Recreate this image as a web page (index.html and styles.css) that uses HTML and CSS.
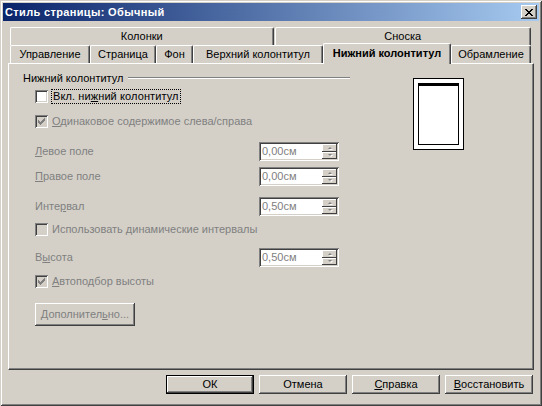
FILE: index.html
```html
<!DOCTYPE html>
<html lang="ru">
<head>
    <meta charset="UTF-8">
    <title>Стиль страницы: Обычный</title>
    <link rel="stylesheet" href="styles.css">
</head>
<body>
    <div class="window">
        <div class="titlebar">
            <span class="title">Стиль страницы: Обычный</span>
            <span class="close-btn">
                <svg width="8" height="7" viewBox="0 0 8 7" shape-rendering="crispEdges">
                    <path fill="#000" d="M0 0h2v1h-2z M6 0h2v1h-2z M1 1h2v1h-2z M5 1h2v1h-2z M2 2h2v1h-2z M4 2h2v1h-2z M3 3h2v1h-2z M4 4h2v1h-2z M2 4h2v1h-2z M5 5h2v1h-2z M1 5h2v1h-2z M6 6h2v1h-2z M0 6h2v1h-2z"/>
                </svg>
            </span>
        </div>

        <div class="client">
            <!-- back row of tabs -->
            <div class="tab-row">
                <div class="tab tab-columns">Колонки</div>
                <div class="tab tab-footnote">Сноска</div>
            </div>
            <!-- front row of tabs -->
            <div class="tab-row">
                <div class="tab tab-organizer">Управление</div>
                <div class="tab tab-page">Страница</div>
                <div class="tab tab-area">Фон</div>
                <div class="tab tab-header">Верхний колонтитул</div>
                <div class="tab tab-footer active">Нижний колонтитул</div>
                <div class="tab tab-borders">Обрамление</div>
            </div>

            <div class="panel">
                <div class="page-form">
                    <div class="group-head">
                        <span>Нижний колонтитул</span>
                        <span class="rule"></span>
                    </div>

                    <div class="row check-row row-on">
                        <span class="check"></span>
                        <span class="focus">Вкл. ни<u>ж</u>ний колонтитул</span>
                    </div>

                    <div class="row check-row row-same disabled">
                        <span class="check checked">
                            <svg width="13" height="13" viewBox="0 0 13 13" shape-rendering="crispEdges">
                                <path fill="#808080" d="M3 5h1v3h-1z M4 6h1v3h-1z M5 7h1v3h-1z M6 6h1v3h-1z M7 5h1v3h-1z M8 4h1v3h-1z M9 3h1v3h-1z"/>
                            </svg>
                        </span>
                        <span class="check-label"><u>О</u>динаковое содержимое слева/справа</span>
                    </div>

                    <div class="row field-row row-left disabled">
                        <span class="field-label"><u>Л</u>евое поле</span>
                        <div class="spin">
                            <span class="spin-value">0,00см</span>
                            <span class="spin-btns"><span class="spin-up"></span><span class="spin-down"></span></span>
                        </div>
                    </div>

                    <div class="row field-row row-right disabled">
                        <span class="field-label"><u>П</u>равое поле</span>
                        <div class="spin">
                            <span class="spin-value">0,00см</span>
                            <span class="spin-btns"><span class="spin-up"></span><span class="spin-down"></span></span>
                        </div>
                    </div>

                    <div class="row field-row row-spacing disabled">
                        <span class="field-label">Инте<u>р</u>вал</span>
                        <div class="spin">
                            <span class="spin-value">0,50см</span>
                            <span class="spin-btns"><span class="spin-up"></span><span class="spin-down"></span></span>
                        </div>
                    </div>

                    <div class="row check-row row-dynamic disabled">
                        <span class="check"></span>
                        <span class="check-label">Использовать <u>д</u>инамические интервалы</span>
                    </div>

                    <div class="row field-row row-height disabled">
                        <span class="field-label">В<u>ы</u>сота</span>
                        <div class="spin">
                            <span class="spin-value">0,50см</span>
                            <span class="spin-btns"><span class="spin-up"></span><span class="spin-down"></span></span>
                        </div>
                    </div>

                    <div class="row check-row row-autofit disabled">
                        <span class="check checked">
                            <svg width="13" height="13" viewBox="0 0 13 13" shape-rendering="crispEdges">
                                <path fill="#808080" d="M3 5h1v3h-1z M4 6h1v3h-1z M5 7h1v3h-1z M6 6h1v3h-1z M7 5h1v3h-1z M8 4h1v3h-1z M9 3h1v3h-1z"/>
                            </svg>
                        </span>
                        <span class="check-label"><u>А</u>втоподбор высоты</span>
                    </div>

                    <div class="row row-more">
                        <button class="btn btn-more" disabled>Дополнител<u>ь</u>но...</button>
                    </div>
                </div>

                <div class="preview">
                    <div class="preview-page"></div>
                </div>
            </div>

            <div class="buttons">
                <button class="btn btn-default">ОК</button>
                <button class="btn">Отмена</button>
                <button class="btn"><u>С</u>правка</button>
                <button class="btn"><u>В</u>осстановить</button>
            </div>
        </div>
    </div>
</body>
</html>
```

FILE: styles.css
```css
* {
    margin: 0;
    padding: 0;
    box-sizing: border-box;
}

body {
    background: #d4d0c8;
    font-family: Tahoma, "Liberation Sans", sans-serif;
    font-size: 11px;
    line-height: 13px;
    color: #000;
}

u {
    text-decoration: underline;
    text-underline-offset: 1px;
}

/* window frame */
.window {
    width: 542px;
    height: 406px;
    padding: 3px;
    display: flex;
    flex-direction: column;
    background: #d4d0c8;
    box-shadow: inset 1px 1px #d4d0c8, inset -1px -1px #404040,
                inset 2px 2px #fff, inset -2px -2px #808080;
}

.titlebar {
    height: 18px;
    display: flex;
    align-items: center;
    justify-content: space-between;
    padding: 0 2px;
    background: linear-gradient(to right, #0a246a, #a6caf0);
    color: #fff;
    font-weight: bold;
}

.title {
    letter-spacing: 0.35px;
}

.close-btn {
    width: 16px;
    height: 14px;
    display: flex;
    align-items: center;
    justify-content: center;
    background: #d4d0c8;
    box-shadow: inset -1px -1px #404040, inset 1px 1px #fff, inset -2px -2px #808080;
}

.client {
    flex: 1;
    display: flex;
    flex-direction: column;
    padding: 6px 5px 0;
}

/* tabs */
.tab-row {
    display: flex;
    height: 18px;
    margin: 0 3px 0 2px;
}

.tab {
    height: 18px;
    display: flex;
    align-items: center;
    justify-content: center;
    white-space: nowrap;
    background: #d4d0c8;
    border-left: 1px solid #fff;
    border-top: 1px solid #fff;
    border-right: 1px solid #404040;
    border-radius: 2px 2px 0 0;
    box-shadow: inset -1px 0 #808080;
    padding-bottom: 1px;
}

.tab-columns { width: 264px; }
.tab-footnote { width: 257px; margin-left: 1px; }
.tab-organizer { width: 80px; }
.tab-page { width: 66px; }
.tab-area { width: 37px; }
.tab-header { width: 130px; }
.tab-footer { width: 128px; }
.tab-borders { width: 80px; }

.tab.active {
    height: 21px;
    margin-top: -2px;
    padding-bottom: 2px;
    font-weight: bold;
    position: relative;
    z-index: 1;
}

/* page panel */
.panel {
    height: 307px;
    display: flex;
    border-left: 1px solid #fff;
    border-top: 1px solid #fff;
    border-right: 1px solid #404040;
    border-bottom: 1px solid #404040;
    box-shadow: inset -1px -1px #808080;
}

.page-form {
    width: 341px;
    padding-left: 14px;
}

.group-head {
    display: flex;
    margin-top: 8px;
    height: 13px;
}

.group-head .rule {
    flex: 1;
    margin: 5px 0 0 5px;
    height: 2px;
    border-top: 1px solid #808080;
    border-bottom: 1px solid #fff;
}

.row {
    display: flex;
    align-items: center;
    padding-left: 12px;
}

.check-row {
    height: 15px;
}

.field-row {
    height: 19px;
}

.row-on { margin-top: 4px; }
.row-same { margin-top: 10px; }
.row-left { margin-top: 13px; }
.row-right { margin-top: 6px; }
.row-spacing { margin-top: 11px; }
.row-dynamic { margin-top: 6px; }
.row-height { margin-top: 11px; }
.row-autofit { margin-top: 7px; }
.row-more { margin-top: 14px; }

.disabled {
    color: #808080;
}

.check {
    width: 13px;
    height: 13px;
    flex: none;
    background: #fff;
    box-shadow: inset 1px 1px #808080, inset -1px -1px #fff,
                inset 2px 2px #404040, inset -2px -2px #d4d0c8;
}

.check svg {
    display: block;
}

.disabled .check {
    background: #d4d0c8;
}

.check-label {
    margin-left: 4px;
}

.focus {
    margin-left: 3px;
    padding: 0 1px;
    border: 1px dotted #000;
    letter-spacing: 0.1px;
}

.field-label {
    width: 224px;
}

/* spin field */
.spin {
    width: 80px;
    height: 19px;
    display: flex;
    padding: 2px;
    background: #fff;
    box-shadow: inset 1px 1px #808080, inset -1px -1px #fff,
                inset 2px 2px #404040, inset -2px -2px #d4d0c8;
}

.spin-value {
    flex: 1;
    padding-left: 1px;
    line-height: 15px;
}

.spin-btns {
    width: 15px;
    display: flex;
    flex-direction: column;
}

.spin-up,
.spin-down {
    flex: 1;
    display: flex;
    align-items: center;
    justify-content: center;
    background: #d4d0c8;
    box-shadow: inset -1px -1px #404040, inset 1px 1px #fff;
}

.spin-up::after,
.spin-down::after {
    content: "";
    border-left: 2px solid transparent;
    border-right: 2px solid transparent;
    filter: drop-shadow(1px 1px 0 #fff);
}

.spin-up::after {
    border-bottom: 2px solid #808080;
}

.spin-down::after {
    border-top: 2px solid #808080;
}

/* push buttons */
.btn {
    width: 88px;
    height: 19px;
    font: inherit;
    color: #000;
    background: #d4d0c8;
    border: none;
    box-shadow: inset -1px -1px #404040, inset 1px 1px #fff,
                inset -2px -2px #808080, inset 2px 2px #d4d0c8;
}

.btn:disabled {
    color: #808080;
}

.btn-more {
    width: 100px;
    height: 23px;
}

.btn-default {
    border: 1px solid #000;
    box-shadow: inset -1px -1px #404040, inset 1px 1px #fff,
                inset -2px -2px #808080;
}

.buttons {
    display: flex;
    justify-content: flex-end;
    gap: 5px;
    margin-top: 5px;
    padding-right: 1px;
}

/* page preview */
.preview {
    width: 51px;
    height: 72px;
    margin: 14px 0 0 63px;
    padding: 4px;
    background: #fff;
    border: 1px solid #000;
}

.preview-page {
    height: 100%;
    border: 1px solid #000;
    border-top-width: 3px;
}
```
